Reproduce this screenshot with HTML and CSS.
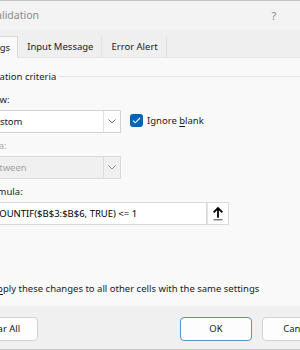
FILE: index.html
```html
<!DOCTYPE html>
<html>
<head>
<meta charset="utf-8">
<link rel="stylesheet" href="styles.css">
</head>
<body>
<div class="dialog">
  <div class="titlebar">
    <span class="title">Data Validation</span>
    <span class="help">?</span>
    <span class="close">✕</span>
  </div>
  <div class="tabs">
    <div class="tab active">Settings</div>
    <div class="tab">Input Message</div>
    <div class="tab">Error Alert</div>
  </div>
  <div class="panel">
    <div class="group"><span class="group-label">Validation criteria</span><span class="group-line"></span></div>
    <div class="field first">
      <div class="label"><u>A</u>llow:</div>
      <div class="row">
        <div class="select">
          <span class="select-text">Custom</span>
          <span class="select-btn"><svg width="8" height="5" viewBox="0 0 8 5"><path d="M0.5 0.5 L4 4 L7.5 0.5" fill="none" stroke="#6b6b6b" stroke-width="1"/></svg></span>
        </div>
        <div class="check"><span class="box"><svg width="9" height="7" viewBox="0 0 9 7"><path d="M1 3.6 L3.3 5.8 L8 1" fill="none" stroke="#ffffff" stroke-width="1.1"/></svg></span><span class="check-text">Ignore <u>b</u>lank</span></div>
      </div>
    </div>
    <div class="field">
      <div class="label disabled"><u>D</u>ata:</div>
      <div class="row">
        <div class="select is-disabled">
          <span class="select-text">between</span>
          <span class="select-btn"><svg width="8" height="5" viewBox="0 0 8 5"><path d="M0.5 0.5 L4 4 L7.5 0.5" fill="none" stroke="#8a8a8a" stroke-width="1"/></svg></span>
        </div>
      </div>
    </div>
    <div class="field">
      <div class="label"><u>F</u>ormula:</div>
      <div class="row">
        <div class="formula">=COUNTIF($B$3:$B$6, TRUE) &lt;= 1</div>
        <div class="refbtn"><svg width="12" height="15" viewBox="0 0 12 15"><path d="M6 0.8 L1 5.8 L2.3 7.1 L5.1 4.3 L5.1 11.8 L6.9 11.8 L6.9 4.3 L9.7 7.1 L11 5.8 Z" fill="#000"/><rect x="1.5" y="13.3" width="9" height="1" fill="#444"/></svg></div>
      </div>
    </div>
    <div class="apply">
      <span class="box empty"></span><span class="apply-text">A<u>p</u>ply these changes to all other cells with the same settings</span>
    </div>
  </div>
  <div class="footer">
    <div class="btn"><u>C</u>lear All</div>
    <div class="btn primary">OK</div>
    <div class="btn">Cancel</div>
  </div>
</div>
</body>
</html>
```
FILE: styles.css
```css
* { box-sizing: border-box; }
html, body { margin: 0; padding: 0; }
body {
  width: 300px;
  height: 350px;
  overflow: hidden;
  background: #f9f9f9;
  font-family: "Noto Sans", "Open Sans", sans-serif;
  font-size: 9.5px;
  color: #1b1b1b;
}
u { text-decoration-thickness: 1px; text-underline-offset: 1.5px; }
.dialog {
  width: 386px;
  height: 350px;
  margin-left: -41px;
  display: flex;
  flex-direction: column;
  border-top: 1px solid #c4c4c4;
  border-bottom: 1px solid #c8c8c8;
}
.titlebar {
  height: 28px;
  flex: none;
  display: flex;
  align-items: center;
  background: #f3f3f3;
}
.title {
  flex: 1;
  padding-left: 5px;
  font-size: 10.5px;
  color: #8a8a8a;
}
.help {
  width: 46px;
  text-align: center;
  font-size: 11px;
  color: #8a8a8a;
}
.close {
  width: 48px;
  text-align: center;
  font-size: 11px;
  color: #8a8a8a;
}
.tabs {
  height: 29px;
  flex: none;
  display: flex;
  align-items: flex-end;
  padding-left: 7px;
  background: #efefef;
  border-bottom: 1px solid #e4e4e4;
}
.tab {
  height: 22px;
  line-height: 21px;
  padding: 0 8px 0 9px;
  border-right: 1px solid #e2e2e2;
  margin-bottom: -1px;
  color: #1b1b1b;
}
.tab.active {
  padding: 0 7px;
  background: #f9f9f9;
  border: 1px solid #d9d9d9;
  border-bottom: 1px solid #f9f9f9;
}
.panel {
  flex: 1;
  padding: 12px 0 0 19px;
  background: #f9f9f9;
}
.group {
  display: flex;
  align-items: center;
  height: 14px;
  line-height: 14px;
}
.group-line {
  flex: 1;
  margin-left: 3px;
  margin-top: -1px;
  border-top: 1px solid #e3e3e3;
}
.field { padding-left: 5px; margin-top: 6px; }
.field.first { margin-top: 9px; }
.label { height: 14px; line-height: 14px; }
.label.disabled { color: #a3a3a3; }
.row {
  display: flex;
  align-items: center;
  margin-top: 3px;
}
.select {
  width: 138px;
  height: 23px;
  display: flex;
  background: #ffffff;
  border: 1px solid #d3d3d3;
}
.select-text {
  flex: 1;
  padding-left: 4px;
  line-height: 21px;
}
.select-btn {
  width: 17px;
  display: flex;
  align-items: center;
  justify-content: center;
  border-left: 1px solid #e2e2e2;
}
.select.is-disabled {
  background: #f0f0f0;
  border-color: #d9d9d9;
  color: #a3a3a3;
}
.select.is-disabled .select-btn { border-left-color: #dcdcdc; }
.check {
  display: flex;
  align-items: center;
  margin-left: 9px;
  margin-top: -3px;
}
.check-text { white-space: nowrap; }
.box {
  width: 13px;
  height: 13px;
  flex: none;
  border-radius: 3px;
  background: #0063b8;
  display: flex;
  align-items: center;
  justify-content: center;
  margin-right: 4px;
}
.box.empty {
  background: #ffffff;
  border: 1px solid #8a8a8a;
}
.formula {
  width: 224px;
  height: 23px;
  line-height: 21px;
  padding-left: 4px;
  background: #ffffff;
  border: 1px solid #dadada;
  color: #000000;
  white-space: nowrap;
}
.refbtn {
  width: 22px;
  height: 23px;
  display: flex;
  align-items: center;
  justify-content: center;
  background: #ffffff;
  border: 1px solid #dadada;
  border-left-color: #e4e4e4;
}
.apply {
  display: flex;
  align-items: center;
  height: 14px;
  margin-top: 56px;
  margin-left: -4px;
}
.apply-text { white-space: nowrap; }
.footer {
  height: 43px;
  flex: none;
  display: flex;
  padding: 11px 11px 0 7px;
  background: #f0f0f0;
  gap: 10px;
}
.btn {
  width: 72px;
  height: 24px;
  line-height: 22px;
  text-align: center;
  background: #fdfdfd;
  border: 1px solid #d2d2d2;
  border-radius: 4px;
}
.btn.primary {
  margin-left: auto;
  border-color: #4f93d6;
}
```
